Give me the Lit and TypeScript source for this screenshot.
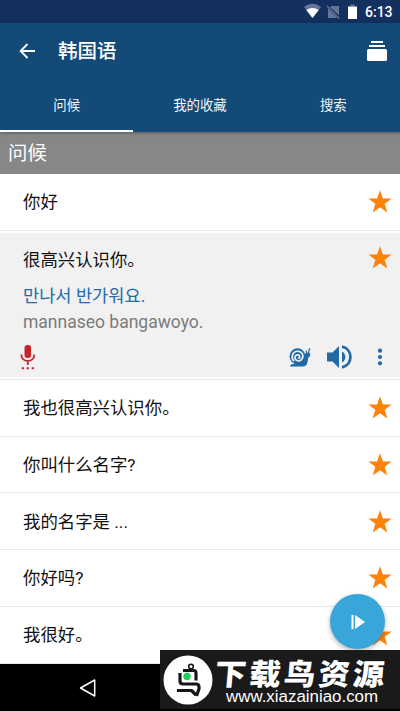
import { LitElement, html, css, svg } from "lit";
import { customElement, property } from "lit/decorators.js";

const star = html`<svg width="24" height="24" viewBox="0 0 24 24"><path fill="#ff8208" d="M12 .3l2.9 8.3h8.8l-7 5.2 2.6 8.6L12 17.200l-7.300 5.200 2.600-8.600-7-5.200h8.800z"/></svg>`;

@customElement("phrase-row")
export class PhraseRow extends LitElement {
  @property() text = "";
  static styles = css`
    :host { display: flex; box-sizing: border-box; height: 56.7px; padding: 1px 8px 0 23px; align-items: center; justify-content: space-between; border-bottom: 1.4px solid #e8e8e8; background: #fff; }
    .label { font-size: 17.4px; line-height: 26px; color: #111; white-space: pre; }
    svg { display: block; }
  `;
  render() {
    return html`<span class="label">${this.text}</span>${star}`;
  }
}

@customElement("app-root")
export class AppRoot extends LitElement {
  static styles = css`
    :host { display: block; position: relative; width: 400px; height: 711px; overflow: hidden; background: #fff; font-family: Roboto, "Noto Sans CJK SC", sans-serif; }
    svg { display: block; flex: none; }
    .status { height: 23px; background: #13305f; display: flex; align-items: center; justify-content: flex-end; padding-right: 8px; box-sizing: border-box; color: #fff; }
    .time { font-size: 14px; font-weight: 500; line-height: 23px; width: 27px; padding-top: 2px; white-space: nowrap; }
    .head { position: relative; z-index: 1; background: #144a78; box-shadow: 0 1px 3px rgba(0,0,0,.35); }
    .bar { height: 56px; display: flex; align-items: center; padding: 0 13px 0 19px; box-sizing: border-box; }
    .title { color: #fff; font-size: 19.5px; font-weight: 500; line-height: 28px; margin: 0 auto 0 22px; padding-top: 2px; }
    .tabs { height: 53px; display: grid; grid-template-columns: repeat(3, 1fr); }
    .tab { box-sizing: border-box; color: #f2f7fb; font-size: 13.4px; line-height: 20px; text-align: center; padding-top: 17px; border-bottom: 2px solid transparent; }
    .tab.on { border-color: #fff; }
    .section { height: 42px; box-sizing: border-box; background: #878787; color: #fff; font-size: 19.4px; line-height: 42px; padding: 1px 0 0 8px; }
    .open { box-sizing: border-box; height: 149.4px; padding-top: 2px; border-bottom: 1.4px solid #e8e8e8; background: #fff; }
    .panel { height: 144.4px; background: #f1f1f1; box-sizing: border-box; padding: 12.4px 8px 0 23px; }
    .line { display: flex; justify-content: space-between; align-items: center; height: 26px; font-size: 17.4px; color: #111; }
    .ko { font-family: Roboto, "Noto Sans CJK KR", sans-serif; font-size: 17.6px; line-height: 26px; color: #266ba6; margin-top: 12px; }
    .roman { font-size: 17.5px; line-height: 26px; color: #7b7b7b; }
    .tools { display: flex; align-items: center; height: 28px; margin: 8px 0 0 -4px; }
    .snail { margin-left: auto; }
    .vol { margin-left: 15px; }
    .more { margin-left: 23px; margin-right: 7px; }
    .fab { position: absolute; left: 330px; top: 594px; width: 55px; height: 55px; border-radius: 50%; background: #38a6d8; box-shadow: 0 2px 5px rgba(0,0,0,.3); display: flex; align-items: center; justify-content: center; }
    .nav { position: absolute; left: 0; right: 0; bottom: 0; height: 47px; background: #000; display: flex; align-items: center; padding-left: 78px; box-sizing: border-box; }
    .mark { position: absolute; left: 160px; top: 650px; width: 240px; height: 59px; background: #1a1a1a; color: #fff; display: flex; box-sizing: border-box; padding: 5px 0 0 3px; }
    .words { margin-left: 3px; width: 180px; }
    .brand { font-family: "Noto Sans CJK SC", sans-serif; font-size: 31.5px; font-weight: 900; line-height: 30px; height: 31px; letter-spacing: 3px; white-space: nowrap; transform: translate(-1px, 2px) skewX(-5deg) scaleY(.94); }
    .url { font-family: "Liberation Sans", sans-serif; font-size: 16.9px; line-height: 18px; margin: 0 0 0 10px; padding-top: 2px; white-space: nowrap; }
  `;

  render() {
    const rows = ["我也很高兴认识你。", "你叫什么名字?", "我的名字是 ...", "你好吗?", "我很好。"];
    return html`
      <div class="status">
        <svg width="61" height="23" viewBox="0 0 61 23">
          <path fill="#637698" d="M0 7Q8.500 .5 17 7L8.500 18z"/><path fill="#fff" d="M2.300 10Q8.500 6 14.700 10L8.500 18z"/>
          <path fill="#637698" d="M27.500 6H35V15.500L26 6.900zM24 8.500L33 18H24z"/><path stroke="#637698" stroke-width="1.300" d="M23 6L35 18.500"/>
          <path fill="#637698" d="M46.500 4.500h4v2h-4z"/><path fill="#fff" d="M44 6.500h9V19h-9z"/>
        </svg>
        <span class="time">6:13</span>
      </div>
      <div class="head">
        <div class="bar">
          <svg width="17" height="16" viewBox="0 0 17 16"><path fill="none" stroke="#fff" stroke-width="1.800" d="M16 8H2M8.500 1L1.600 8l6.900 7"/></svg>
          <span class="title">韩国语</span>
          <svg width="20" height="20" viewBox="0 0 20 20"><path fill="#fff" d="M4 0h12v2H4zM2 4h16v2H2z"/><rect y="8" width="20" height="12" rx="1.500" fill="#fff"/></svg>
        </div>
        <div class="tabs">
          <div class="tab on">问候</div><div class="tab">我的收藏</div><div class="tab">搜索</div>
        </div>
      </div>
      <div class="section">问候</div>
      <phrase-row .text=${"你好"}></phrase-row>
      <div class="open"><div class="panel">
        <div class="line"><span>很高兴认识你。</span>${star}</div>
        <div class="ko">만나서 반가워요.</div>
        <div class="roman">mannaseo bangawoyo.</div>
        <div class="tools">
          <svg width="18" height="26" viewBox="0 0 18 26"><rect x="5.500" y="1" width="6.600" height="13" rx="3" fill="#c6242b"/><path fill="none" stroke="#c6242b" stroke-width="1.800" d="M2.300 10.500C2.300 19 15.300 19 15.300 10.500M8.800 17v4"/><path fill="#c6242b" d="M2.700 23.300h2.200v2H2.700zM7.700 23.300h2.200v2H7.700zM12.700 23.300h2.200v2h-2.200z"/></svg>
          <svg class="snail" width="22" height="20" viewBox="0 0 22 20">
            <path fill="#2269a5" d="M1 19.500c0-1.800 2-2.500 4-2.500l8-2c2.500-1.500 2.500-4.500 3-7.500.4-2 4.700-2.500 5.200-.3.400 2-1.400 2.500-2 3.800-.6 3.800-.7 8.500-5.200 8.500z"/>
            <circle cx="8.500" cy="9.300" r="8" fill="#2269a5"/>
            <path fill="none" stroke="#f1f1f1" stroke-width="1.600" d="M5 14.200C1.700 11 3 4.600 8.500 4.300c5.200-.2 7 5.600 3.700 8.600-2.600 2.300-6.600.5-6.200-2.800.4-2.700 4.300-3 4.700-.4.100 1.200-.7 1.800-1.700 1.500"/>
            <path fill="none" stroke="#2269a5" stroke-width="1.200" d="M17.700 7l-.5-3.500M19.700 6l.3-3.500 1.200-1"/>
          </svg>
          <svg class="vol" width="26" height="26" viewBox="0 0 26 26"><path fill="#2269a5" d="M1 8.500h5.500L13 2v22l-6.500-6.500H1zM16 7.500c4.600 2.500 4.600 8.500 0 11z"/><path fill="none" stroke="#2269a5" stroke-width="2.800" d="M16 2.700C27.200 5 27.200 21 16 23.300"/></svg>
          <svg class="more" width="10" height="18" viewBox="0 0 10 18">${[2.7, 9, 15.3].map(y => svg`<circle cx="5" cy=${y} r="2.1" fill="#2269a5"/>`)}</svg>
        </div>
      </div></div>
      ${rows.map(t => html`<phrase-row .text=${t}></phrase-row>`)}
      <div class="fab"><svg width="14" height="14" viewBox="0 0 14 14"><path fill="#fff" d="M.5 0h2v14h-2zM4 0l10 7-10 7z"/></svg></div>
      <div class="nav"><svg width="19" height="20" viewBox="0 0 19 20"><path fill="none" stroke="#fff" stroke-width="1.500" stroke-linejoin="round" d="M16.700 2v16L2.500 10z"/></svg></div>
      <div class="mark">
        <svg width="50" height="50" viewBox="0 0 50 50">
          <circle cx="25" cy="25" r="24.500" fill="#fff"/>
          <g fill="none" stroke="#161616" stroke-width="3.200" stroke-linejoin="round">
            <circle cx="28" cy="11.500" r="2.300" stroke-width="1.600"/>
            <path d="M20 15.500h10.500q2.500 0 2.500 2.500v7.500M17 18v8q0 3 3 3h13q3 0 3 3v2l-2.500 7M14 35.500h14.500l4.500 4.500"/>
          </g>
          <circle cx="24" cy="21.500" r="3.700" fill="#20cf58"/>
        </svg>
        <div class="words"><div class="brand">下载鸟资源</div><div class="url">www.xiazainiao.com</div></div>
      </div>
    `;
  }
}
